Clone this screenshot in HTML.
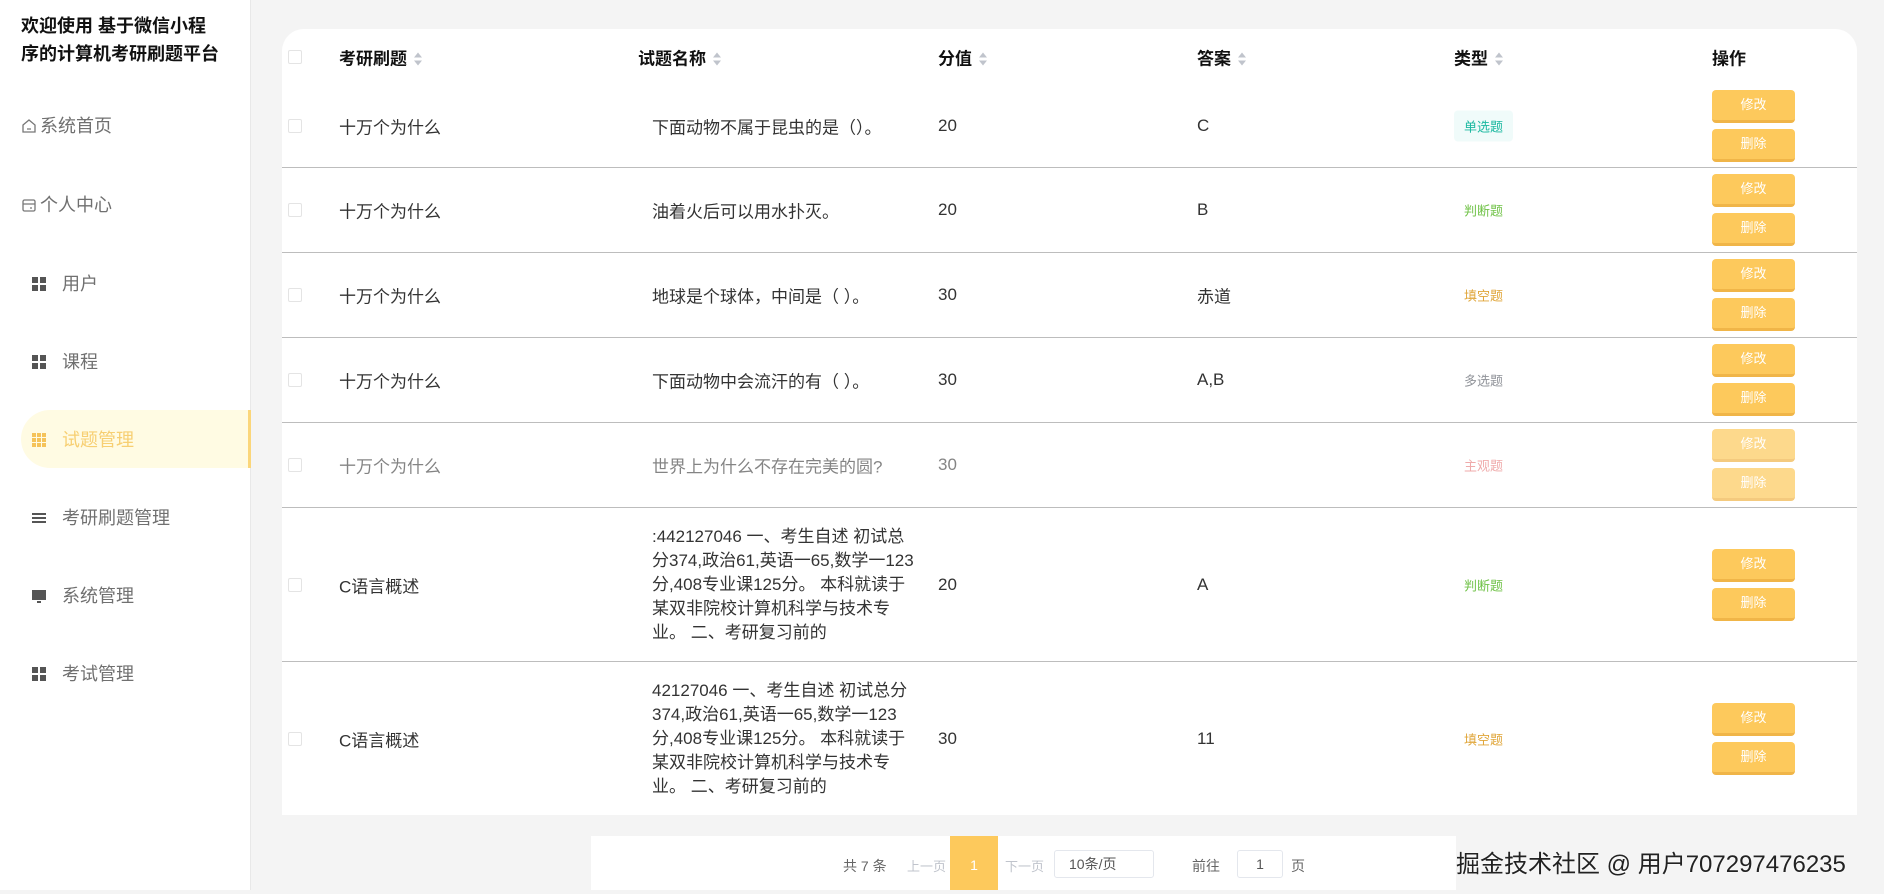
<!DOCTYPE html>
<html><head><meta charset="utf-8">
<style>
*{margin:0;padding:0;box-sizing:border-box}
body{width:1884px;height:890px;overflow:hidden;background:#f4f4f4;font-family:"Liberation Sans","Noto Sans CJK SC",sans-serif;position:relative;color:#333}
.side{position:absolute;left:0;top:0;width:251px;height:890px;background:#fff;border-right:1px solid #e8e8e8}
.title{position:absolute;left:21px;top:12px;font-size:18px;font-weight:bold;line-height:28px;color:#111;white-space:nowrap}
.mi{position:absolute;left:21px;font-size:18px;color:#707070;height:30px;line-height:30px;display:flex;align-items:center}
.mi .ic{width:14px;height:14px;margin-right:16px;margin-left:11px;display:inline-block}
.grid4{background:
 linear-gradient(#555,#555) 0 0/6px 6px no-repeat,linear-gradient(#555,#555) 8px 0/6px 6px no-repeat,
 linear-gradient(#555,#555) 0 8px/6px 6px no-repeat,linear-gradient(#555,#555) 8px 8px/6px 6px no-repeat}
.grid9{background:
 repeating-linear-gradient(90deg,transparent 0 4px,#fffbe3 4px 5px),
 repeating-linear-gradient(0deg,transparent 0 4px,#fffbe3 4px 5px),#f5c35a}
.active{position:absolute;left:21px;top:410px;width:230px;height:58px;background:#fffbe3;border-radius:29px 0 0 29px;border-right:3px solid #fbd67a}
.card{position:absolute;left:282px;top:29px;width:1575px;height:786px;background:#fff;border-radius:22px 22px 0 0}
.row{position:absolute;left:0;width:1575px;border-bottom:1.5px solid #bdbdbd}
.c{position:absolute;top:50%;transform:translateY(-50%);font-size:17px;color:#333}
.cb{position:absolute;left:6px;top:50%;margin-top:-7px;width:14px;height:14px;border:1px solid #e4e4e4;border-radius:2px;background:#fff}
.hd{font-weight:bold;color:#111;font-size:17px}
.sort{display:inline-block;vertical-align:middle;margin-left:7px;width:8px;height:14px;position:relative}
.sort:before{content:"";position:absolute;left:0;top:0;border:4px solid transparent;border-bottom:5px solid #c0c4cc;border-top:0}
.sort:after{content:"";position:absolute;left:0;top:8px;border:4px solid transparent;border-top:5px solid #c0c4cc;border-bottom:0}
.tag{font-size:13px;padding:6px 10px;border-radius:4px}
.btns{position:absolute;left:1430px;top:50%;transform:translateY(-50%);width:83px}
.btn{width:83px;height:33px;background:#fdc95c;border-bottom:3px solid #f0b548;border-radius:4px;color:#fff;font-size:13px;text-align:center;line-height:30px;margin:0 0 6px}
.btn:last-child{margin-bottom:0}
.fade .c{opacity:.6}.fade .btn{opacity:.7}
.pag{position:absolute;left:591px;top:836px;width:1266px;height:54px;background:#fff;font-size:14px;color:#666}
.pag span{position:absolute;top:20px}
</style></head><body>
<div class="side">
<div class="title">欢迎使用 基于微信小程<br>序的计算机考研刷题平台</div>
<div class="mi" style="top:111px;left:21px"><svg width="16" height="16" viewBox="0 0 16 16" style="margin-right:3px"><path d="M2 7L8 2L14 7V14H2Z M6 11H10" fill="none" stroke="#777" stroke-width="1.3"/></svg>系统首页</div>
<div class="mi" style="top:190px;left:21px"><svg width="16" height="16" viewBox="0 0 16 16" style="margin-right:3px"><rect x="2" y="3" width="12" height="11" rx="1.5" fill="none" stroke="#777" stroke-width="1.3"/><path d="M2 7H14 M9 11H11" stroke="#777" stroke-width="1.3"/></svg>个人中心</div>
<div class="mi" style="top:269px"><span class="ic grid4"></span>用户</div>
<div class="mi" style="top:347px"><span class="ic grid4"></span>课程</div>
<div class="active"></div>
<div class="mi" style="top:425px;color:#f7cf72"><span class="ic grid9"></span>试题管理</div>
<div class="mi" style="top:503px"><span class="ic" style="background:linear-gradient(#555,#555) 0 2px/14px 2px no-repeat,linear-gradient(#555,#555) 0 6px/14px 2px no-repeat,linear-gradient(#555,#555) 0 10px/14px 2px no-repeat"></span>考研刷题管理</div>
<div class="mi" style="top:581px"><span class="ic" style="background:linear-gradient(#555,#555) 0 1px/14px 10px no-repeat,linear-gradient(#555,#555) 5px 12px/4px 2px no-repeat"></span>系统管理</div>
<div class="mi" style="top:659px"><span class="ic grid4"></span>考试管理</div>
</div>

<div class="card">
<div class="row" style="top:0;height:55px;border:none">
 <div class="cb"></div>
 <div class="c hd" style="left:57px">考研刷题<i class="sort"></i></div>
 <div class="c hd" style="left:356px">试题名称<i class="sort"></i></div>
 <div class="c hd" style="left:656px">分值<i class="sort"></i></div>
 <div class="c hd" style="left:915px">答案<i class="sort"></i></div>
 <div class="c hd" style="left:1172px">类型<i class="sort"></i></div>
 <div class="c hd" style="left:1430px">操作</div>
</div>
<div class="row" style="top:55px;height:84px">
 <div class="cb"></div><div class="c" style="left:57px">十万个为什么</div>
 <div class="c" style="left:370px">下面动物不属于昆虫的是（）。</div>
 <div class="c" style="left:656px">20</div><div class="c" style="left:915px">C</div>
 <div class="c tag" style="left:1172px;color:#1cb8a0;background:#f0fbfa">单选题</div>
 <div class="btns"><div class="btn">修改</div><div class="btn">删除</div></div>
</div>
<div class="row" style="top:139px;height:85px">
 <div class="cb"></div><div class="c" style="left:57px">十万个为什么</div>
 <div class="c" style="left:370px">油着火后可以用水扑灭。</div>
 <div class="c" style="left:656px">20</div><div class="c" style="left:915px">B</div>
 <div class="c tag" style="left:1172px;color:#72c34a">判断题</div>
 <div class="btns"><div class="btn">修改</div><div class="btn">删除</div></div>
</div>
<div class="row" style="top:224px;height:85px">
 <div class="cb"></div><div class="c" style="left:57px">十万个为什么</div>
 <div class="c" style="left:370px">地球是个球体，中间是（ ）。</div>
 <div class="c" style="left:656px">30</div><div class="c" style="left:915px">赤道</div>
 <div class="c tag" style="left:1172px;color:#e0a63a">填空题</div>
 <div class="btns"><div class="btn">修改</div><div class="btn">删除</div></div>
</div>
<div class="row" style="top:309px;height:85px">
 <div class="cb"></div><div class="c" style="left:57px">十万个为什么</div>
 <div class="c" style="left:370px">下面动物中会流汗的有（ ）。</div>
 <div class="c" style="left:656px">30</div><div class="c" style="left:915px">A,B</div>
 <div class="c tag" style="left:1172px;color:#909399">多选题</div>
 <div class="btns"><div class="btn">修改</div><div class="btn">删除</div></div>
</div>
<div class="row fade" style="top:394px;height:85px">
 <div class="cb"></div><div class="c" style="left:57px">十万个为什么</div>
 <div class="c" style="left:370px">世界上为什么不存在完美的圆?</div>
 <div class="c" style="left:656px">30</div>
 <div class="c tag" style="left:1172px;color:#e57373">主观题</div>
 <div class="btns"><div class="btn">修改</div><div class="btn">删除</div></div>
</div>
<div class="row" style="top:479px;height:154px">
 <div class="cb"></div><div class="c" style="left:57px">C语言概述</div>
 <div class="c" style="left:370px;line-height:24px">:442127046 一、考生自述 初试总<br>分374,政治61,英语一65,数学一123<br>分,408专业课125分。 本科就读于<br>某双非院校计算机科学与技术专<br>业。 二、考研复习前的</div>
 <div class="c" style="left:656px">20</div><div class="c" style="left:915px">A</div>
 <div class="c tag" style="left:1172px;color:#72c34a">判断题</div>
 <div class="btns"><div class="btn">修改</div><div class="btn">删除</div></div>
</div>
<div class="row" style="top:633px;height:153px;border:none">
 <div class="cb"></div><div class="c" style="left:57px">C语言概述</div>
 <div class="c" style="left:370px;line-height:24px">42127046 一、考生自述 初试总分<br>374,政治61,英语一65,数学一123<br>分,408专业课125分。 本科就读于<br>某双非院校计算机科学与技术专<br>业。 二、考研复习前的</div>
 <div class="c" style="left:656px">30</div><div class="c" style="left:915px">11</div>
 <div class="c tag" style="left:1172px;color:#e0a63a">填空题</div>
 <div class="btns"><div class="btn">修改</div><div class="btn">删除</div></div>
</div>
</div>

<div class="pag">
 <span style="left:252px">共 7 条</span>
 <span style="left:316px;color:#c0c4cc;font-size:13px">上一页</span>
 <div style="position:absolute;left:359px;top:0;width:48px;height:54px;background:#fdc95c;color:#fff;text-align:center;line-height:58px">1</div>
 <span style="left:414px;color:#c0c4cc;font-size:13px">下一页</span>
 <div style="position:absolute;left:463px;top:14px;width:100px;height:28px;border:1px solid #e4e7ed;border-radius:3px;padding-left:14px;line-height:26px;color:#555">10条/页</div>
 <span style="left:601px">前往</span>
 <div style="position:absolute;left:646px;top:14px;width:46px;height:28px;border:1px solid #e4e7ed;border-radius:3px;text-align:center;line-height:26px;color:#555">1</div>
 <span style="left:700px">页</span>
 <div style="position:absolute;left:865px;top:0;width:401px;height:54px;background:#f4f4f4"></div>
 <span style="left:865px;top:8px;font-size:24px;color:#222;text-shadow:0 0 2px #fff">掘金技术社区 @ 用户707297476235</span>
</div>
</body></html>
